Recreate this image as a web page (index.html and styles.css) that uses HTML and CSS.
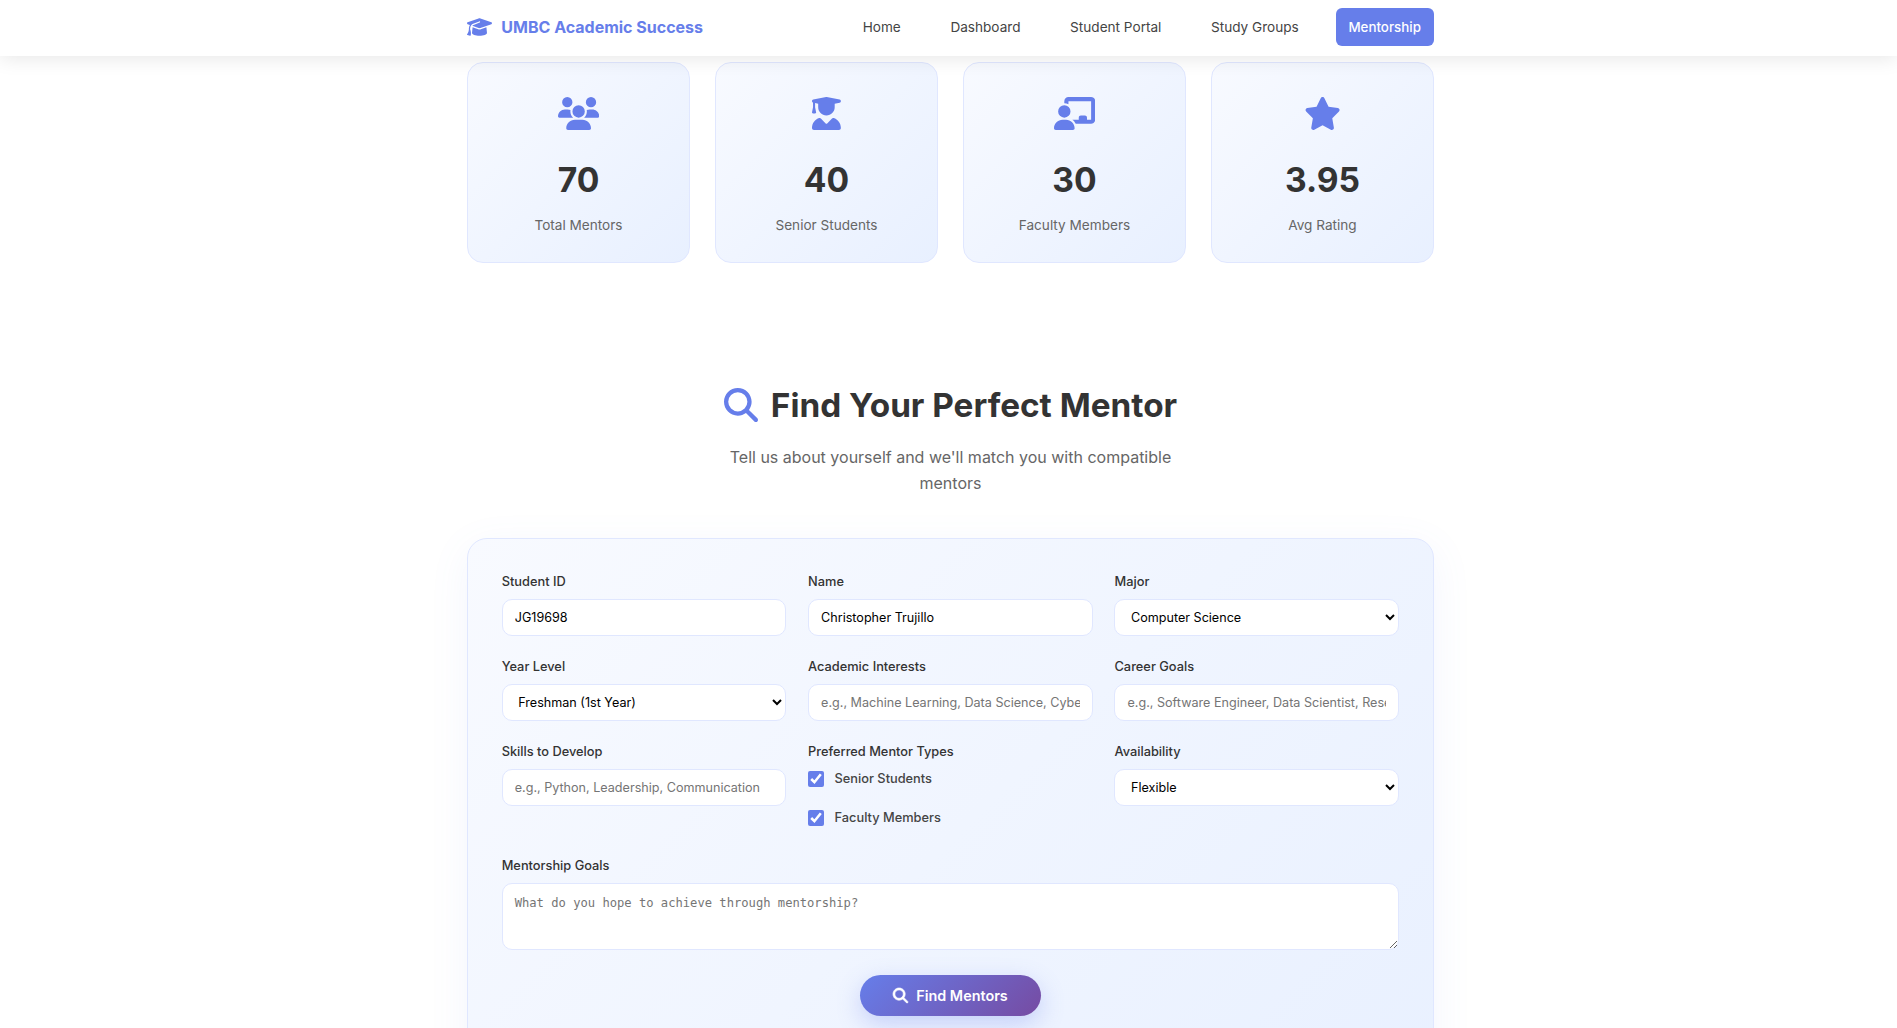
FILE: index.html
```html
<!DOCTYPE html>
<html lang="en">
<head>
<meta charset="utf-8">
<title>UMBC Academic Success - Mentorship</title>
<link rel="stylesheet" href="styles.css">
</head>
<body>
<header class="navbar">
  <div class="nav-inner">
    <a class="brand" href="#">
      <svg class="brand-icon" viewBox="0 0 640 512"><path d="M320 32c-8.1 0-16.1 1.4-23.7 4.1L15.8 137.4C6.3 140.9 0 149.9 0 160s6.3 19.1 15.8 22.6l57.9 20.9C57.3 229.3 48 259.8 48 291.9v28.1c0 28.4-10.8 57.7-22.3 80.8c-6.5 13-13.9 25.8-22.5 37.6C0 442.7-.9 448.3 .9 453.4s6 8.9 11.2 10.2l64 16c4.2 1.1 8.7 .3 12.4-2s6.3-6.1 7.1-10.4c8.6-42.8 4.3-81.2-2.1-108.7C90.3 344.3 86 329.8 80 316.5V291.9c0-30.2 10.2-58.7 27.9-81.5c12.9-15.5 29.6-28 49.2-35.7l157-61.7c8.2-3.2 17.5 .8 20.7 9s-.8 17.5-9 20.7l-157 61.7c-12.4 4.9-23.3 12.4-32.2 21.6l159.6 57.6c7.6 2.7 15.6 4.1 23.7 4.1s16.1-1.4 23.7-4.1L624.2 182.6c9.5-3.4 15.8-12.5 15.8-22.6s-6.3-19.1-15.8-22.6L343.7 36.1C336.1 33.4 328.1 32 320 32zM128 408c0 35.3 86 72 192 72s192-36.7 192-72L496.7 262.6 354.5 314c-11.1 4-22.8 6-34.5 6s-23.5-2-34.5-6L143.3 262.6 128 408z"/></svg>
      <span>UMBC Academic Success</span>
    </a>
    <nav class="nav-links">
      <a class="nav-link" href="#">Home</a>
      <a class="nav-link" href="#">Dashboard</a>
      <a class="nav-link" href="#">Student Portal</a>
      <a class="nav-link" href="#">Study Groups</a>
      <a class="nav-link active" href="#">Mentorship</a>
    </nav>
  </div>
</header>

<main class="content">
  <section class="stats">
    <div class="stat-card">
      <svg class="stat-icon" viewBox="0 0 640 512"><path d="M144 0a80 80 0 1 1 0 160A80 80 0 1 1 144 0zM512 0a80 80 0 1 1 0 160A80 80 0 1 1 512 0zM0 298.7C0 239.8 47.8 192 106.7 192h42.7c15.9 0 31 3.5 44.6 9.7c-1.3 7.2-1.9 14.7-1.9 22.3c0 38.2 16.8 72.5 43.3 96c-.2 0-.4 0-.7 0H21.3C9.6 320 0 310.4 0 298.7zM405.3 320c-.2 0-.4 0-.7 0c26.6-23.5 43.3-57.8 43.3-96c0-7.6-.7-15-1.9-22.3c13.6-6.3 28.7-9.7 44.6-9.7h42.7C592.2 192 640 239.8 640 298.7c0 11.8-9.6 21.3-21.3 21.3H405.3zM224 224a96 96 0 1 1 192 0 96 96 0 1 1 -192 0zM128 485.3C128 411.7 187.7 352 261.3 352H378.7C452.3 352 512 411.7 512 485.3c0 14.7-11.9 26.7-26.7 26.7H154.7c-14.7 0-26.7-11.9-26.7-26.7z"/></svg>
      <div class="stat-value">70</div>
      <div class="stat-label">Total Mentors</div>
    </div>
    <div class="stat-card">
      <svg class="stat-icon" viewBox="0 0 448 512"><path d="M219.3 .5c3.1-.6 6.3-.6 9.4 0l200 40C439.9 42.7 448 52.6 448 64s-8.1 21.3-19.3 23.5L352 102.9V160c0 70.7-57.3 128-128 128s-128-57.3-128-128V102.9L48 93.3v65.1l15.7 78.4c.9 4.7-.3 9.6-3.3 13.3s-7.6 5.9-12.4 5.9H16c-4.8 0-9.3-2.1-12.4-5.9s-4.3-8.6-3.3-13.3L16 158.4V86.6C6.5 83.3 0 74.3 0 64C0 52.6 8.1 42.7 19.3 40.5l200-40zM111.9 327.7c10.5-3.4 21.8 .4 29.4 8.5l71 75.5c6.3 6.7 17 6.7 23.3 0l71-75.5c7.6-8.1 18.9-11.9 29.4-8.5C401 348.6 448 409.4 448 481.3c0 17-13.8 30.7-30.7 30.7H30.7C13.8 512 0 498.2 0 481.3c0-71.9 47-132.7 111.9-153.6z"/></svg>
      <div class="stat-value">40</div>
      <div class="stat-label">Senior Students</div>
    </div>
    <div class="stat-card">
      <svg class="stat-icon" viewBox="0 0 640 512"><path d="M160 64c0-35.3 28.7-64 64-64H576c35.3 0 64 28.7 64 64V352c0 35.3-28.7 64-64 64H336.8c-11.8-25.5-29.9-47.5-52.4-64H384V320c0-17.7 14.3-32 32-32h64c17.7 0 32 14.3 32 32v32h64V64L224 64v49.1C205.2 102.2 183.3 96 160 96V64zm0 64a96 96 0 1 1 0 192 96 96 0 1 1 0-192zM133.3 352h53.3C260.3 352 320 411.7 320 485.3c0 14.7-11.9 26.7-26.7 26.7H26.7C11.9 512 0 500.1 0 485.3C0 411.7 59.7 352 133.3 352z"/></svg>
      <div class="stat-value">30</div>
      <div class="stat-label">Faculty Members</div>
    </div>
    <div class="stat-card">
      <svg class="stat-icon" viewBox="0 0 576 512"><path d="M316.9 18C311.6 7 300.4 0 288.1 0s-23.4 7-28.8 18L195 150.3 51.4 171.5c-12 1.8-22 10.2-25.7 21.7s-.7 24.2 7.9 32.7L137.8 329 113.2 474.7c-2 12 3 24.2 12.9 31.3s23 8 33.8 2.3l128.3-68.5 128.3 68.5c10.8 5.7 23.9 4.9 33.8-2.3s14.9-19.3 12.9-31.3L438.5 329 542.7 225.9c8.6-8.5 11.7-21.2 7.9-32.7s-13.7-19.9-25.7-21.7L381.2 150.3 316.9 18z"/></svg>
      <div class="stat-value">3.95</div>
      <div class="stat-label">Avg Rating</div>
    </div>
  </section>

  <section class="finder">
    <h1 class="finder-title">
      <svg class="title-icon" viewBox="0 0 512 512"><path d="M416 208c0 45.9-14.9 88.3-40 122.7L502.6 457.4c12.5 12.5 12.5 32.8 0 45.3s-32.8 12.5-45.3 0L330.7 376c-34.4 25.2-76.8 40-122.7 40C93.1 416 0 322.9 0 208S93.1 0 208 0S416 93.1 416 208zM208 352a144 144 0 1 0 0-288 144 144 0 1 0 0 288z"/></svg>
      Find Your Perfect Mentor
    </h1>
    <p class="finder-sub">Tell us about yourself and we'll match you with compatible mentors</p>

    <form class="finder-form">
      <div class="form-grid">
        <div class="field">
          <label class="field-label" for="sid">Student ID</label>
          <input class="control" id="sid" type="text" value="JG19698">
        </div>
        <div class="field">
          <label class="field-label" for="name">Name</label>
          <input class="control" id="name" type="text" value="Christopher Trujillo">
        </div>
        <div class="field">
          <label class="field-label" for="major">Major</label>
          <select class="control select" id="major"><option>Computer Science</option></select>
        </div>
        <div class="field">
          <label class="field-label" for="year">Year Level</label>
          <select class="control select" id="year"><option>Freshman (1st Year)</option></select>
        </div>
        <div class="field">
          <label class="field-label" for="interests">Academic Interests</label>
          <input class="control" id="interests" type="text" placeholder="e.g., Machine Learning, Data Science, Cybersecurity">
        </div>
        <div class="field">
          <label class="field-label" for="career">Career Goals</label>
          <input class="control" id="career" type="text" placeholder="e.g., Software Engineer, Data Scientist, Researcher">
        </div>
        <div class="field">
          <label class="field-label" for="skills">Skills to Develop</label>
          <input class="control" id="skills" type="text" placeholder="e.g., Python, Leadership, Communication">
        </div>
        <div class="field">
          <span class="field-label">Preferred Mentor Types</span>
          <div class="checks">
            <label class="check"><input type="checkbox" checked>Senior Students</label>
            <label class="check"><input type="checkbox" checked>Faculty Members</label>
          </div>
        </div>
        <div class="field">
          <label class="field-label" for="avail">Availability</label>
          <select class="control select" id="avail"><option>Flexible</option></select>
        </div>
      </div>
      <div class="field goals">
        <label class="field-label" for="goals">Mentorship Goals</label>
        <textarea class="control textarea" id="goals" placeholder="What do you hope to achieve through mentorship?"></textarea>
      </div>
      <div class="actions">
        <button class="find-btn" type="button">
          <svg class="btn-icon" viewBox="0 0 512 512"><path d="M416 208c0 45.9-14.9 88.3-40 122.7L502.6 457.4c12.5 12.5 12.5 32.8 0 45.3s-32.8 12.5-45.3 0L330.7 376c-34.4 25.2-76.8 40-122.7 40C93.1 416 0 322.9 0 208S93.1 0 208 0S416 93.1 416 208zM208 352a144 144 0 1 0 0-288 144 144 0 1 0 0 288z"/></svg>
          Find Mentors
        </button>
      </div>
    </form>
  </section>
</main>
</body>
</html>
```
FILE: styles.css
```css
* { box-sizing: border-box; }
html, body { margin: 0; height: 1028px; overflow: hidden; background: #fff; }
body { font-family: Inter, "Liberation Sans", sans-serif; color: #333; }
a { text-decoration: none; }

.navbar {
  height: 56px;
  background: #fff;
  box-shadow: 0 2px 20px rgba(0, 0, 0, 0.1);
  position: relative;
  z-index: 5;
}
.nav-inner {
  width: 966.4px;
  margin-left: 467.3px;
  height: 100%;
  display: flex;
  align-items: center;
  justify-content: space-between;
}
.brand {
  display: flex;
  align-items: center;
  gap: 9px;
  color: #667eea;
  font-size: 16px;
  font-weight: 700;
  margin-top: -3px;
}
.brand-icon { width: 25px; height: 20px; fill: #667eea; }
.nav-links { display: flex; gap: 24px; align-items: center; margin-top: -2px; }
.nav-link {
  display: block;
  padding: 10px 12.8px;
  color: #444;
  font-size: 13.6px;
  line-height: 18px;
  border-radius: 6px;
  font-weight: 400;
}
.nav-link.active { background: #667eea; color: #fff; font-size: 13.35px; font-weight: 500; height: 38px; }

.content { width: 966.4px; margin-left: 467.3px; padding-top: 6px; }

.stats { display: grid; grid-template-columns: repeat(4, 1fr); gap: 25.6px; }
.stat-card {
  height: 201px;
  padding-top: 34px;
  text-align: center;
  border: 1px solid #e0e7ff;
  border-radius: 16px;
  background: linear-gradient(135deg, #f8faff 0%, #e8f0ff 100%);
  display: flex;
  flex-direction: column;
  align-items: center;
}
.stat-icon { height: 33px; fill: #667eea; display: block; }
.stat-value { font-size: 33.6px; font-weight: 700; line-height: 42px; margin-top: 29px; color: #333; }
.stat-label { font-size: 13.6px; line-height: 20px; margin-top: 14px; color: #666; }

.finder { margin-top: 121px; }
.finder-title {
  margin: 0;
  font-size: 33.3px;
  line-height: 42px;
  font-weight: 700;
  color: #333;
  display: flex;
  justify-content: center;
  align-items: center;
  gap: 13px;
}
.title-icon { width: 34px; height: 34px; fill: #667eea; }
.finder-sub {
  width: 480px;
  margin: 18px auto 0;
  text-align: center;
  font-size: 16px;
  line-height: 26px;
  color: #666;
}
.finder-form {
  margin-top: 42px;
  height: 600px;
  padding: 35px 33.4px 0;
  border: 1px solid #e0e7ff;
  border-radius: 20px;
  background: linear-gradient(135deg, #f8faff 0%, #e8f0ff 100%);
  box-shadow: 0 10px 40px rgba(102, 126, 234, 0.08);
}
.form-grid { display: grid; grid-template-columns: repeat(3, 1fr); column-gap: 21.6px; row-gap: 23px; }
.field { display: flex; flex-direction: column; }
.field-label { font-size: 12.8px; line-height: 16px; font-weight: 500; color: #333; margin-bottom: 9px; }
.control {
  width: 100%;
  height: 37px;
  padding: 0 12px;
  border: 1px solid #e0e7ff;
  border-radius: 10px;
  background: #fff;
  font-family: Inter, "Liberation Sans", sans-serif;
  font-size: 12.6px;
  color: #000;
}
.control::placeholder { color: #757575; }
.select { padding-left: 11.5px; }
.checks { display: flex; flex-direction: column; gap: 19px; margin-top: 0; }
.check { display: flex; align-items: center; gap: 10.5px; font-size: 12.8px; line-height: 20px; font-weight: 500; color: #444; }
.check input { width: 16px; height: 16px; margin: 0; accent-color: #667eea; }
.goals { margin-top: 29.5px; }
.textarea {
  height: 67px;
  padding: 12px;
  font-family: "DejaVu Sans Mono", monospace;
  font-size: 12.15px;
}
.actions { display: flex; justify-content: center; margin-top: 25px; }
.find-btn {
  display: flex;
  align-items: center;
  gap: 8px;
  height: 41px;
  padding: 0 33px;
  border: 0;
  border-radius: 25px;
  color: #fff;
  font-family: Inter, "Liberation Sans", sans-serif;
  font-size: 14.4px;
  font-weight: 600;
  background: linear-gradient(135deg, #667eea 0%, #764ba2 100%);
  box-shadow: 0 8px 25px rgba(102, 126, 234, 0.3);
}
.btn-icon { width: 15px; height: 15px; fill: #fff; stroke: #fff; stroke-width: 22; overflow: visible; }
```
